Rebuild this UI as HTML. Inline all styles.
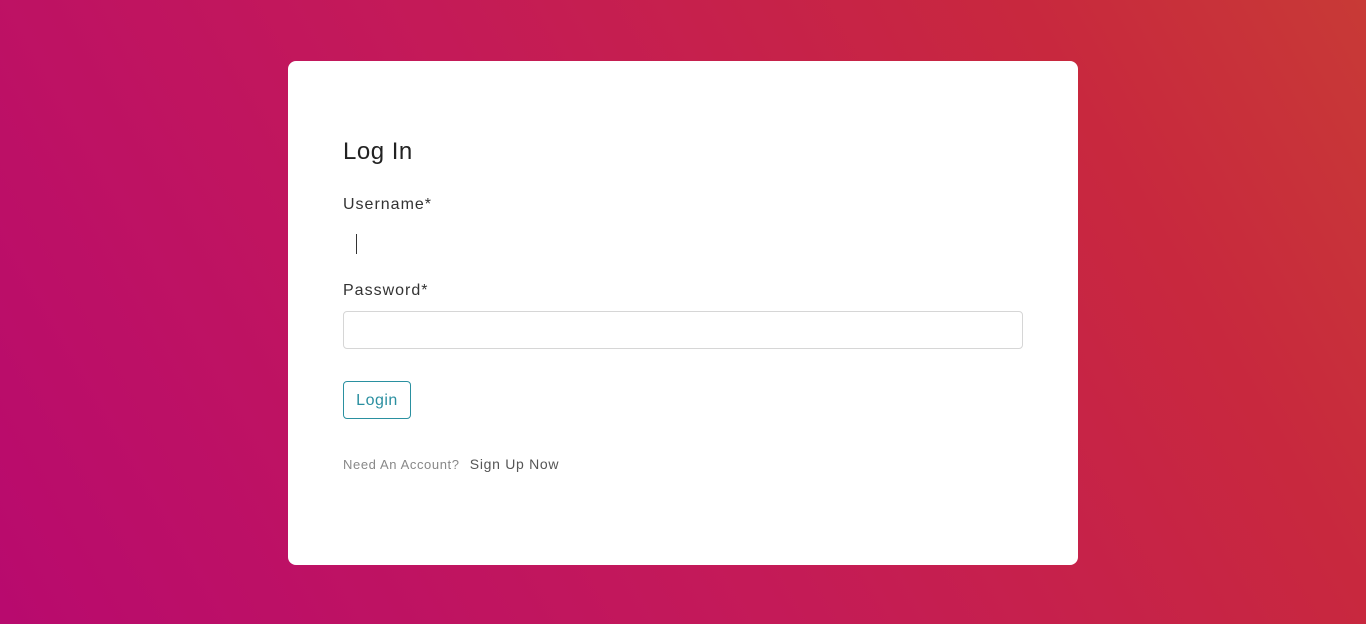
<!DOCTYPE html>
<html><head><meta charset="utf-8"><style>
html,body{margin:0;width:1366px;height:624px;overflow:hidden;font-family:"Liberation Sans",sans-serif}
body{background:linear-gradient(60deg,#b80a6e 0%,#c41a58 45%,#c8283e 80%,#c83a36 100%);position:relative}
.card{position:absolute;left:288px;top:61px;width:790px;height:504px;background:#fff;border-radius:8px}
h1{position:absolute;left:55px;top:77px;margin:0;font-weight:normal;font-size:24px;color:#222;letter-spacing:0.5px}
.l{position:absolute;left:55px;font-size:16px;color:#333;letter-spacing:1px}
.caret{position:absolute;left:68px;top:173px;width:1px;height:20px;background:#333}
.inp{position:absolute;left:55px;top:250px;width:678px;height:36px;border:1px solid #d6d6d6;border-radius:4px}
.btn{position:absolute;left:55px;top:320px;width:66px;height:36px;border:1px solid #2a90a0;border-radius:4px;color:#2a8fa0;font-size:16px;line-height:38px;text-align:center;letter-spacing:0.5px}
.f{position:absolute;left:55px;top:395px;font-size:13px;color:#888;letter-spacing:0.6px}
.f b{font-weight:normal;color:#555;font-size:14px;margin-left:6px;letter-spacing:0.7px}
</style></head><body>
<div class="card">
<h1>Log In</h1>
<div class="l" style="top:135px">Username*</div>
<div class="caret"></div>
<div class="l" style="top:221px">Password*</div>
<div class="inp"></div>
<div class="btn">Login</div>
<div class="f">Need An Account? <b>Sign Up Now</b></div>
</div>
</body></html>
